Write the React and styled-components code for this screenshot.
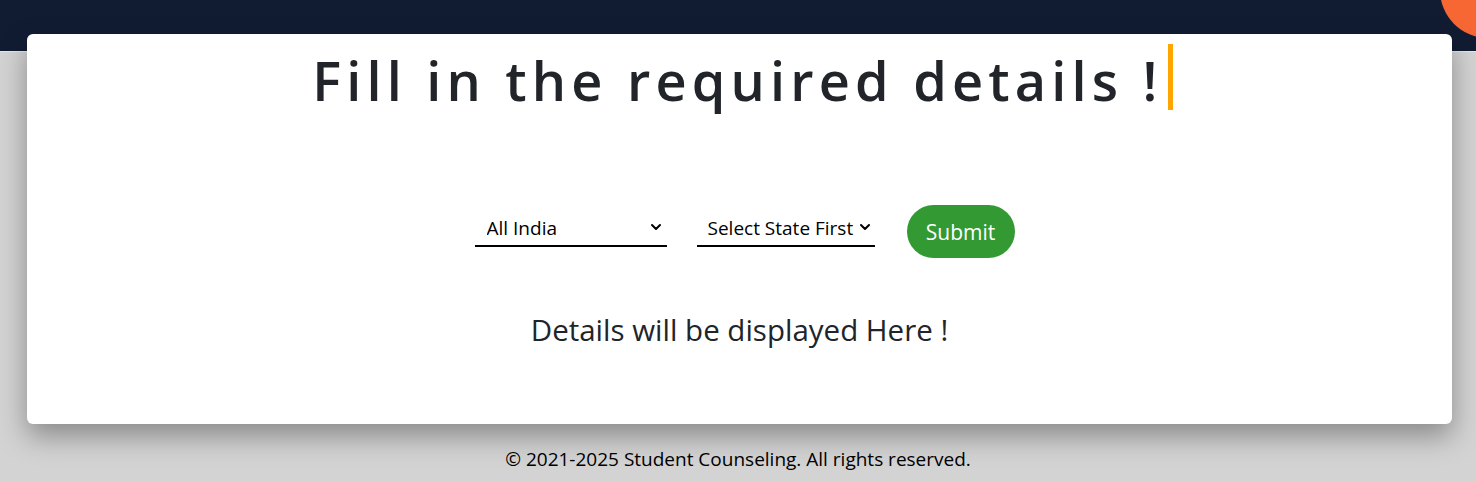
import styled, { createGlobalStyle } from 'styled-components';

const GlobalStyle = createGlobalStyle`
  * { box-sizing: border-box; }
  body {
    margin: 0;
    background-color: #d3d3d3;
    font-family: 'Open Sans', 'Noto Sans', sans-serif;
    color: #212529;
    overflow: hidden;
  }
`;

const Page = styled.div`
  min-height: 481px;
  display: flex;
  flex-direction: column;
  position: relative;
  overflow: hidden;
`;

const Header = styled.header`
  height: 52px;
  background-color: #111c33;
  border-bottom: 1px solid #e6e6e6;
`;

const Blob = styled.div`
  position: absolute;
  top: -58px;
  right: -60px;
  width: 96px;
  height: 96px;
  border-radius: 50%;
  background-color: #f66733;
`;

const Card = styled.main`
  position: relative;
  margin: -18px 24px 0 27px;
  height: 390px;
  background-color: #fff;
  border-radius: 6px;
  box-shadow: 0 12px 28px rgba(0, 0, 0, 0.35);
  display: flex;
  flex-direction: column;
  align-items: center;
`;

const Title = styled.h1`
  margin: 10px 0 0 6px;
  height: 66px;
  padding-right: 5px;
  border-right: 5px solid #ffa500;
  font-size: 54px;
  font-weight: 600;
  letter-spacing: 5.2px;
  line-height: 72px;
  white-space: nowrap;
`;

const Form = styled.form`
  margin: 95px 0 0 10px;
  display: flex;
  align-items: center;
  gap: 30px;
`;

const SelectWrap = styled.div`
  position: relative;
  width: ${({ width }) => width}px;
  margin-bottom: 6px;
  margin-right: ${({ extra }) => extra || 0}px;

  svg {
    position: absolute;
    right: ${({ arrowRight }) => arrowRight}px;
    top: 10px;
    pointer-events: none;
  }
`;

const Select = styled.select`
  appearance: none;
  width: 100%;
  height: 36px;
  border: none;
  border-bottom: 2px solid #000;
  background: transparent;
  font-family: inherit;
  font-size: 19px;
  color: #000;
  padding: 0 0 0 ${({ padLeft }) => padLeft}px;
  outline: none;
`;

const SubmitButton = styled.button`
  height: 53px;
  width: 108px;
  border: none;
  border-radius: 27px;
  background-color: #339933;
  color: #fff;
  font-family: inherit;
  font-size: 21px;
  cursor: pointer;
`;

const Details = styled.p`
  margin: 52px 0 0;
  font-size: 29.5px;
  line-height: 40px;
`;

const Footer = styled.footer`
  margin-top: 22px;
  text-align: center;
  font-size: 19px;
  color: #000;
`;

const Chevron = () => (
  <svg width="12" height="12" viewBox="0 0 12 12" fill="none">
    <path d="M2 4 L6 8 L10 4" stroke="#000" strokeWidth="2" strokeLinecap="round" strokeLinejoin="round" />
  </svg>
);

export default function App() {
  return (
    <>
      <GlobalStyle />
      <Page>
        <Header />
        <Blob />
        <Card>
          <Title>Fill in the required details !</Title>
          <Form onSubmit={(e) => e.preventDefault()}>
            <SelectWrap width={192} arrowRight={5}>
              <Select padLeft={12} defaultValue="all">
                <option value="all">All India</option>
              </Select>
              <Chevron />
            </SelectWrap>
            <SelectWrap width={178} arrowRight={4} extra={2}>
              <Select padLeft={11} defaultValue="none">
                <option value="none">Select State First</option>
              </Select>
              <Chevron />
            </SelectWrap>
            <SubmitButton type="submit">Submit</SubmitButton>
          </Form>
          <Details>Details will be displayed Here !</Details>
        </Card>
        <Footer>© 2021-2025 Student Counseling. All rights reserved.</Footer>
      </Page>
    </>
  );
}
